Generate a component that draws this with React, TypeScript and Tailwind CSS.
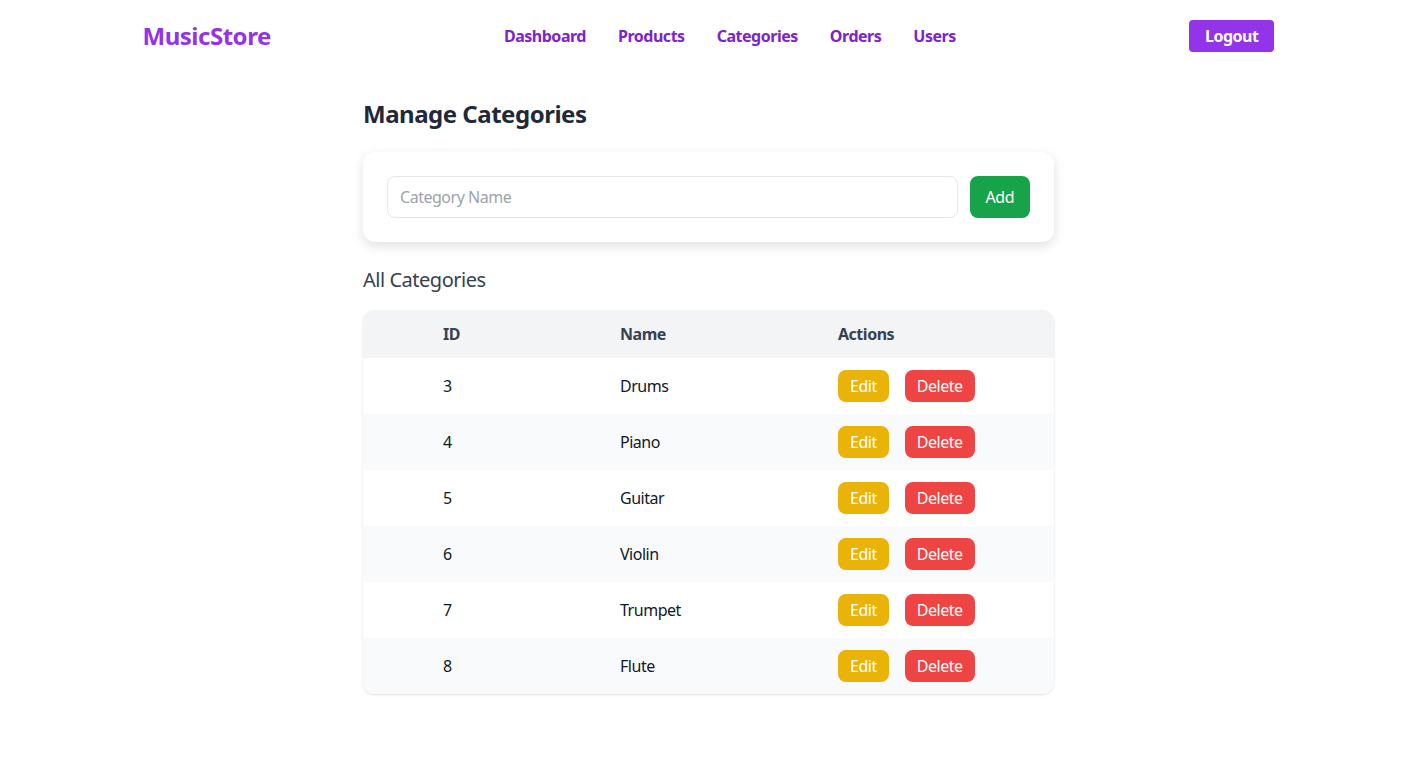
import React from 'react';

const categories = [
  { id: 3, name: 'Drums' },
  { id: 4, name: 'Piano' },
  { id: 5, name: 'Guitar' },
  { id: 6, name: 'Violin' },
  { id: 7, name: 'Trumpet' },
  { id: 8, name: 'Flute' },
];

const App: React.FC = () => {
  return (
    <div className="min-h-screen bg-white tracking-[-0.03em]" style={{ fontFamily: '"Segoe UI", "Noto Sans", sans-serif' }}>
      {/* Navbar */}
      <nav className="w-[1132px] mx-auto py-5 flex items-center justify-between">
        <span className="text-2xl font-bold text-[#9333ea]">MusicStore</span>
        <div className="flex gap-8">
          {['Dashboard', 'Products', 'Categories', 'Orders', 'Users'].map((item) => (
            <a key={item} href="#" className="text-base font-bold text-[#7e22ce]">{item}</a>
          ))}
        </div>
        <button className="bg-[#9333ea] text-white font-bold px-4 py-1 rounded">Logout</button>
      </nav>

      <main className="w-[691px] mx-auto pt-[26px]">
        <h1 className="text-2xl font-bold text-[#1f2937] mb-[22px]">Manage Categories</h1>

        <div className="bg-white rounded-xl shadow-[0_4px_12px_rgba(0,0,0,0.12)] p-6 flex gap-3 mb-6">
          <input
            type="text"
            placeholder="Category Name"
            className="flex-1 border border-[#e5e7eb] rounded-lg px-3 py-2 text-base placeholder:text-[#9ca3af] outline-none"
          />
          <button className="bg-[#16a34a] text-white px-4 py-2 rounded-lg">Add</button>
        </div>

        <h2 className="text-xl text-[#374151] mb-4">All Categories</h2>

        <div className="rounded-xl overflow-hidden shadow-sm">
          <table className="w-full table-fixed text-left">
            <thead className="bg-[#f3f4f6]">
              <tr className="h-12">
                <th className="w-[177px] px-20 font-bold text-[#374151]">ID</th>
                <th className="w-[218px] px-20 font-bold text-[#374151]">Name</th>
                <th className="px-20 font-bold text-[#374151]">Actions</th>
              </tr>
            </thead>
            <tbody>
              {categories.map((c, i) => (
                <tr key={c.id} className={`h-14 ${i % 2 === 1 ? 'bg-[#f9fafb]' : 'bg-white'}`}>
                  <td className="px-20 text-[#111827]">{c.id}</td>
                  <td className="px-20 text-[#111827]">{c.name}</td>
                  <td className="px-20">
                    <div className="flex gap-4">
                      <button className="bg-[#eab308] text-white px-3 py-1 rounded-lg">Edit</button>
                      <button className="bg-[#ef4444] text-white px-3 py-1 rounded-lg">Delete</button>
                    </div>
                  </td>
                </tr>
              ))}
            </tbody>
          </table>
        </div>
      </main>
    </div>
  );
};

export default App;
